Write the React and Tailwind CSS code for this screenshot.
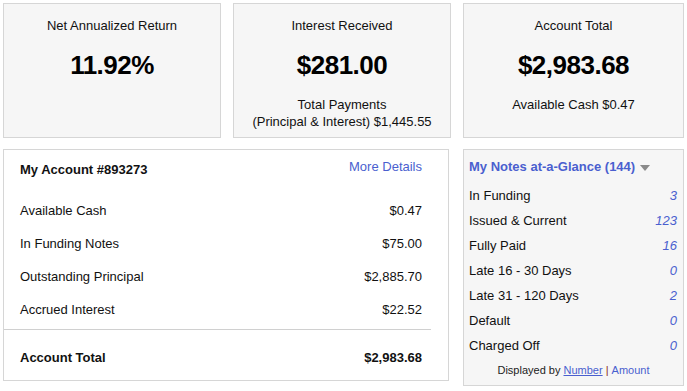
export default function App() {
  const font = { fontFamily: '"Liberation Sans", Arial, Helvetica, sans-serif' };
  const blue = "text-[#4a5fcf]";
  const rows = [
    ["Available Cash", "$0.47"],
    ["In Funding Notes", "$75.00"],
    ["Outstanding Principal", "$2,885.70"],
    ["Accrued Interest", "$22.52"],
  ];
  const notes = [
    ["In Funding", "3"],
    ["Issued & Current", "123"],
    ["Fully Paid", "16"],
    ["Late 16 - 30 Days", "0"],
    ["Late 31 - 120 Days", "2"],
    ["Default", "0"],
    ["Charged Off", "0"],
  ];
  return (
    <div className="w-[687px] h-[391px] bg-white text-[#111] pt-[3px] px-[3px]" style={font}>
      <div className="flex gap-[12px]">
        <div className="w-[218px] h-[135px] bg-[#f6f6f6] border border-[#d6d6d6] flex flex-col items-center pt-[14px]">
          <div className="text-[13px] leading-[16px]">Net Annualized Return</div>
          <div className="mt-[15px] text-[26px] leading-[32px] font-bold tracking-[-0.5px] text-black">11.92%</div>
        </div>
        <div className="w-[218px] h-[135px] bg-[#f6f6f6] border border-[#d6d6d6] flex flex-col items-center pt-[14px]">
          <div className="text-[13px] leading-[16px]">Interest Received</div>
          <div className="mt-[15px] text-[26px] leading-[32px] font-bold tracking-[-0.5px] text-black">$281.00</div>
          <div className="mt-[15px] text-[13px] leading-[17px] text-center">
            Total Payments
            <br />
            (Principal &amp; Interest) $1,445.55
          </div>
        </div>
        <div className="w-[221px] h-[135px] bg-[#f6f6f6] border border-[#d6d6d6] flex flex-col items-center pt-[14px]">
          <div className="text-[13px] leading-[16px]">Account Total</div>
          <div className="mt-[15px] text-[26px] leading-[32px] font-bold tracking-[-0.5px] text-black">$2,983.68</div>
          <div className="mt-[15px] text-[13px] leading-[17px]">Available Cash $0.47</div>
        </div>
      </div>

      <div className="flex gap-[14px] mt-[11px] items-start">
        <div className="w-[446px] h-[232px] bg-white border border-[#d6d6d6] flex flex-col">
          <div className="h-[44px] flex justify-between pl-[16px] pr-[26px] pt-[9px]">
            <div className="mt-[3px] text-[13px] leading-[16px] font-bold">My Account #893273</div>
            <div className={`text-[13px] leading-[16px] ${blue}`}>More Details</div>
          </div>
          {rows.map(([k, v]) => (
            <div key={k} className="h-[33px] flex items-center justify-between pl-[16px] pr-[26px] text-[13px]">
              <span>{k}</span>
              <span>{v}</span>
            </div>
          ))}
          <div className="mt-[3px] mr-[17px] border-t border-[#d0d0d0]"></div>
          <div className="flex justify-between pl-[16px] pr-[26px] pt-[20px] text-[13px] leading-[16px] font-bold">
            <span>Account Total</span>
            <span>$2,983.68</span>
          </div>
        </div>

        <div className="w-[221px] h-[237px] bg-[#f6f6f6] border border-[#d6d6d6] flex flex-col px-[5px]">
          <div className="h-[33px] pt-[9px] flex items-start">
            <span className={`text-[13px] leading-[16px] font-bold ${blue}`}>My Notes at-a-Glance (144)</span>
            <svg className="ml-[5px] mt-[6px]" width="10" height="6" viewBox="0 0 10 6">
              <path d="M0 0 L10 0 L5 6 Z" fill="#8a8a8a" />
            </svg>
          </div>
          {notes.map(([k, v]) => (
            <div key={k} className="h-[25px] flex items-center justify-between text-[13px] pr-[1px]">
              <span>{k}</span>
              <span className={`italic ${blue}`}>{v}</span>
            </div>
          ))}
          <div className="h-[24px] flex items-center justify-center text-[11px]">
            <span className="text-[#222]">Displayed by&nbsp;</span>
            <span className={`underline ${blue}`}>Number</span>
            <span className="text-[#8b2a1a]">&nbsp;|&nbsp;</span>
            <span className={blue}>Amount</span>
          </div>
        </div>
      </div>
    </div>
  );
}
